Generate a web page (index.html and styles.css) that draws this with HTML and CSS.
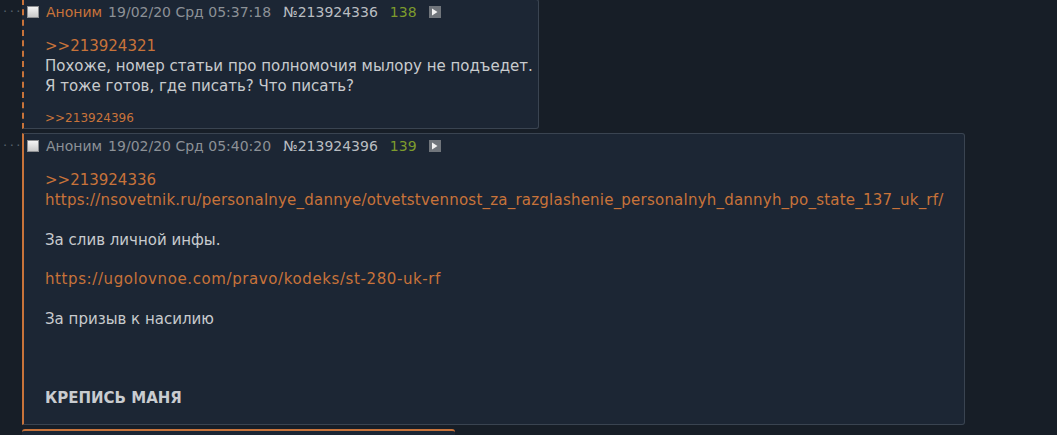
FILE: index.html
```html
<!DOCTYPE html>
<html lang="ru">
<head>
<meta charset="utf-8">
<title>Тред</title>
<link rel="stylesheet" href="styles.css">
</head>
<body>
<div class="thread">
  <div class="row">
    <div class="dots">···</div>
    <div class="post post-a">
      <div class="post-head">
        <span class="check"></span>
        <span class="name">Аноним</span>
        <span class="date">19/02/20 Срд 05:37:18</span>
        <span class="num">№213924336</span>
        <span class="count">138</span>
        <span class="play"><svg width="7" height="8" viewBox="0 0 7 8"><path d="M1 0.5 L6.5 4 L1 7.5 Z" fill="#f2f2f2"/></svg></span>
      </div>
      <div class="post-body">
        <a class="link" href="#">&gt;&gt;213924321</a><br>
        Похоже, номер статьи про полномочия мылору не подъедет.<br>
        Я тоже готов, где писать? Что писать?
      </div>
      <div class="replies"><a class="link" href="#">&gt;&gt;213924396</a></div>
    </div>
  </div>
  <div class="row">
    <div class="dots">···</div>
    <div class="post post-b">
      <div class="post-head">
        <span class="check"></span>
        <span class="name anon-gray">Аноним</span>
        <span class="date">19/02/20 Срд 05:40:20</span>
        <span class="num">№213924396</span>
        <span class="count">139</span>
        <span class="play"><svg width="7" height="8" viewBox="0 0 7 8"><path d="M1 0.5 L6.5 4 L1 7.5 Z" fill="#f2f2f2"/></svg></span>
      </div>
      <div class="post-body last">
        <a class="link" href="#">&gt;&gt;213924336</a><br>
        <a class="link url" href="#">https://nsovetnik.ru/personalnye_dannye/otvetstvennost_za_razglashenie_personalnyh_dannyh_po_state_137_uk_rf/</a><br>
        <br>
        За слив личной инфы.<br>
        <br>
        <a class="link url url-short" href="#">https://ugolovnoe.com/pravo/kodeks/st-280-uk-rf</a><br>
        <br>
        За призыв к насилию<br>
        <br>
        <br>
        <br>
        <strong class="bold">КРЕПИСЬ МАНЯ</strong>
      </div>
    </div>
  </div>
  <div class="row">
    <div class="dots"></div>
    <div class="post post-c"></div>
  </div>
</div>
</body>
</html>
```
FILE: styles.css
```css
html, body {
  margin: 0;
  padding: 0;
  background: #171e27;
  font-family: "DejaVu Sans", Verdana, sans-serif;
  color: #c8cbce;
  overflow: hidden;
}

.thread {
  display: flex;
  flex-direction: column;
  gap: 4px;
  margin-top: -1px;
}

.row {
  display: flex;
  align-items: flex-start;
}

.dots {
  width: 22px;
  flex: none;
  box-sizing: border-box;
  padding: 6px 0 0 3px;
  font-size: 13px;
  line-height: 14px;
  letter-spacing: 2.5px;
  color: #56616c;
}

.post {
  box-sizing: border-box;
  background: #1c2634;
  border: 1px solid #3a4451;
  border-left: 2px solid #c8733a;
  border-radius: 0 3px 3px 0;
}

.post-a {
  width: 517px;
  border-left: 2px dashed #c8733a;
}

.post-b {
  width: 943px;
}

.post-c {
  width: 433px;
  height: 20px;
  border: none;
  border-top: 2px solid #c8733a;
  border-radius: 3px 3px 0 0;
}

.post-head {
  display: flex;
  align-items: center;
  height: 22px;
  padding: 1px 0 0 3px;
  font-size: 14px;
  white-space: nowrap;
}

.check {
  width: 10px;
  height: 10px;
  border: 1px solid #8d8f92;
  background: linear-gradient(#f4f4f4, #c9c9c9);
  margin-right: 7px;
  flex: none;
}

.name {
  color: #c8733a;
  margin-right: 6px;
}

.anon-gray {
  color: #8c9197;
}

.date {
  color: #8c9197;
  margin-right: 12px;
}

.num {
  color: #b9bdc1;
  margin-right: 12px;
}

.count {
  color: #7d9b2d;
  margin-right: 12px;
}

.play {
  width: 12px;
  height: 12px;
  background: #70757b;
  display: flex;
  align-items: center;
  justify-content: center;
}

.post-body {
  margin: 14px 10px 17px 21px;
  font-size: 15px;
  line-height: 19.8px;
  white-space: nowrap;
}

.post-body.last {
  margin-bottom: 15px;
}

.link {
  color: #c8733a;
  text-decoration: none;
}

.url {
  letter-spacing: 0.22px;
}

.url-short {
  letter-spacing: 0.6px;
}

.bold {
  font-weight: bold;
  color: #c9ccd0;
}

.replies {
  margin: -3px 0 2px 21px;
  font-size: 12px;
  line-height: 16px;
}
```
